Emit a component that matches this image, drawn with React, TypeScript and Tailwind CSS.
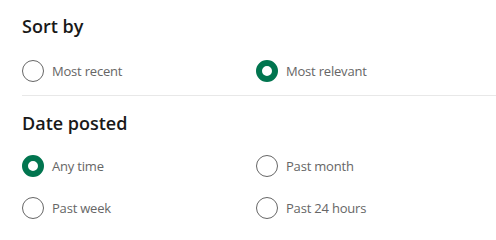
import React from "react";

function Radio({ label, checked }: { label: string; checked?: boolean }) {
  return (
    <label className="flex items-center h-[22px]">
      {checked ? (
        <span className="w-[22px] h-[22px] rounded-full border-[6.5px] border-[#01754f] bg-white shrink-0" />
      ) : (
        <span className="w-[22px] h-[22px] rounded-full border border-[#666666] bg-white shrink-0" />
      )}
      <span className="ml-[8px] text-[13px] leading-[20px] tracking-[-0.2px] text-[#666666]">{label}</span>
    </label>
  );
}

export default function App() {
  return (
    <div
      className="w-[496px] h-[230px] bg-white overflow-hidden"
      style={{ fontFamily: '"Open Sans", "Noto Sans", sans-serif' }}
    >
      <div className="pl-[22px] pt-[14px]">
        <h2 className="text-[18px] leading-[24px] font-semibold text-[#191919]">Sort by</h2>
        <div className="grid grid-cols-[234px_1fr] mt-[22px]">
          <Radio label="Most recent" />
          <Radio label="Most relevant" checked />
        </div>
      </div>
      <div className="ml-[22px] mt-[13px] border-t border-[#e8e8e8]" />
      <div className="pl-[22px] pt-[15px]">
        <h2 className="text-[18px] leading-[24px] font-semibold text-[#191919]">Date posted</h2>
        <div className="grid grid-cols-[234px_1fr] gap-y-[20px] mt-[20px]">
          <Radio label="Any time" checked />
          <Radio label="Past month" />
          <Radio label="Past week" />
          <Radio label="Past 24 hours" />
        </div>
      </div>
    </div>
  );
}
